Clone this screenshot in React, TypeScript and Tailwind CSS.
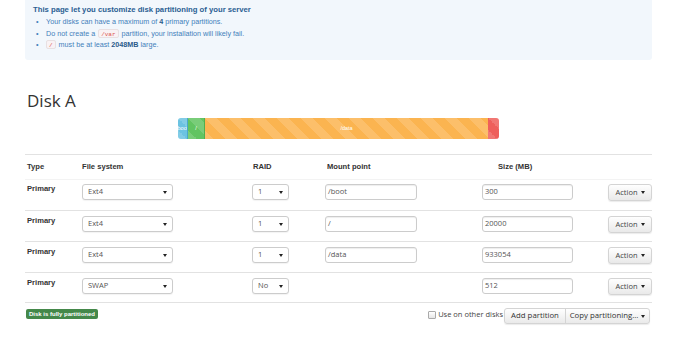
import React from "react";

function Caret() {
  return (
    <span className="inline-block w-0 h-0 border-l-[2.5px] border-r-[2.5px] border-t-[3px] border-l-transparent border-r-transparent border-t-[#222]" />
  );
}

function Select({ value, w }: { value: string; w: string }) {
  return (
    <div
      className={`${w} h-[16px] border border-[#ccc] rounded-[3px] bg-white flex items-center justify-between pl-[5px] pr-[5px] text-[7.5px] text-[#555] shadow-[0_1px_1px_rgba(0,0,0,0.05)]`}
      style={{ fontFamily: '"Open Sans", sans-serif' }}
    >
      <span>{value}</span>
      <Caret />
    </div>
  );
}

function Input({ value, w }: { value: string; w: string }) {
  return (
    <div
      className={`${w} h-[16px] border border-[#ccc] rounded-[3px] bg-white flex items-center pl-[2px] text-[7.5px] text-[#555] shadow-[inset_0_1px_1px_rgba(0,0,0,0.07)]`}
      style={{ fontFamily: '"Open Sans", sans-serif' }}
    >
      {value}
    </div>
  );
}

function ActionBtn() {
  return (
    <div
      className="w-[44px] h-[17px] border border-[#d4d4d4] rounded-[3px] bg-gradient-to-b from-white to-[#e9e9e9] flex items-center justify-center gap-[3px] text-[7.5px] text-[#444] shadow-[0_1px_1px_rgba(0,0,0,0.08)]"
      style={{ fontFamily: '"Open Sans", sans-serif' }}
    >
      <span>Action</span>
      <Caret />
    </div>
  );
}

const rows = [
  { fs: "Ext4", raid: "1", mount: "/boot", size: "300" },
  { fs: "Ext4", raid: "1", mount: "/", size: "20000" },
  { fs: "Ext4", raid: "1", mount: "/data", size: "933054" },
  { fs: "SWAP", raid: "No", mount: null as string | null, size: "512" },
];

const stripeBg =
  "bg-[linear-gradient(45deg,rgba(255,255,255,0.15)_25%,transparent_25%,transparent_50%,rgba(255,255,255,0.15)_50%,rgba(255,255,255,0.15)_75%,transparent_75%,transparent)] bg-[length:24px_24px]";

export default function App() {
  return (
    <div
      className="w-[680px] h-[338px] bg-white overflow-hidden"
      style={{ fontFamily: '"Liberation Sans", Arial, sans-serif' }}
    >
      <div className="ml-[25px] w-[627px]">
        {/* info panel */}
        <div className="h-[60px] bg-[#f2f7fc] rounded-b-[3px] pl-[8px] pt-[4px]">
          <div className="text-[7.7px] leading-[12px] font-bold text-[#2a5f93]">
            This page let you customize disk partitioning of your server
          </div>
          <div className="text-[7.2px] leading-[11.5px] text-[#4380bb]">
            <div className="flex items-center">
              <span className="w-[13px] pl-[3px]">•</span>
              <span>
                Your disks can have a maximum of <b className="text-[#2a5a8a]">4</b> primary partitions.
              </span>
            </div>
            <div className="flex items-center">
              <span className="w-[13px] pl-[3px]">•</span>
              <span className="flex items-center">
                Do not create a
                <code className="mx-[3px] px-[2px] h-[9px] leading-[9px] text-[6px] text-[#d9534f] bg-[#f9f2f4] border border-[#e8e0e2] rounded-[2px] font-mono">
                  /var
                </code>
                partition, your installation will likely fail.
              </span>
            </div>
            <div className="flex items-center">
              <span className="w-[13px] pl-[3px]">•</span>
              <span className="flex items-center">
                <code className="mr-[3px] px-[2px] h-[9px] leading-[9px] text-[6px] text-[#d9534f] bg-[#f9f2f4] border border-[#e8e0e2] rounded-[2px] font-mono">
                  /
                </code>
                must be at least&nbsp;<b className="text-[#2a5a8a]">2048MB</b>&nbsp;large.
              </span>
            </div>
          </div>
        </div>

        {/* heading */}
        <div
          className="mt-[31px] pl-[2px] text-[17px] leading-[20px] text-[#333]"
          style={{ fontFamily: '"Open Sans", sans-serif' }}
        >
          Disk A
        </div>

        {/* progress bar */}
        <div className="mt-[7px] mx-auto w-[321px] h-[21px] rounded-[3px] overflow-hidden flex text-[5.5px] text-white">
          <div className={`w-[10px] bg-[#6cc3e2] ${stripeBg} flex items-center overflow-hidden whitespace-nowrap border-r border-[#4aa8c8]`}>
            <span className="-ml-[2px]">/boot</span>
          </div>
          <div className={`w-[17px] bg-[#62c462] ${stripeBg} flex items-center justify-center border-r border-[#4fae4f]`}>
            /
          </div>
          <div className={`flex-1 bg-[#fbb450] ${stripeBg} flex items-center justify-center`}>
            /data
          </div>
          <div className={`w-[11px] bg-[#ee5f5b] ${stripeBg}`} />
        </div>

        {/* table */}
        <div className="mt-[15px] border-t border-[#e2e2e2] text-[7.6px] text-[#333]">
          <div className="h-[25px] flex items-center font-bold border-b border-[#f3f3f3]">
            <div className="w-[57px] pl-[2px]">Type</div>
            <div className="w-[171px]">File system</div>
            <div className="w-[72px]">RAID</div>
            <div className="w-[157px] pl-[2px]">Mount point</div>
            <div className="w-[125px] pl-[16px]">Size (MB)</div>
            <div className="w-[45px]" />
          </div>
          {rows.map((r, i) => (
            <div
              key={i}
              className={`${i === 0 || i === 3 ? "h-[30px]" : "h-[31px]"} flex items-start ${i > 0 ? "border-t border-[#e2e2e2]" : ""}`}
            >
              <div className={`w-[57px] pl-[2px] ${i === 0 ? "pt-[3px]" : "pt-[4px]"} leading-[12px] font-bold`}>Primary</div>
              <div className={`w-[171px] ${i === 0 ? "pt-[4px]" : "pt-[5px]"}`}>
                <Select value={r.fs} w="w-[91px]" />
              </div>
              <div className={`w-[72px] ${i === 0 ? "pt-[4px]" : "pt-[5px]"} -ml-[1px]`}>
                <Select value={r.raid} w="w-[37px]" />
              </div>
              <div className={`w-[157px] ${i === 0 ? "pt-[4px]" : "pt-[5px]"} ml-[1px]`}>
                {r.mount !== null && <Input value={r.mount} w="w-[92px]" />}
              </div>
              <div className={`w-[125px] ${i === 0 ? "pt-[4px]" : "pt-[5px]"}`}>
                <Input value={r.size} w="w-[91px]" />
              </div>
              <div className={`w-[45px] ${i === 0 ? "pt-[4px]" : "pt-[5px]"} flex justify-end`}>
                <ActionBtn />
              </div>
            </div>
          ))}
          <div className="border-t border-[#e2e2e2] flex items-start justify-between">
            <div className="mt-[6px] ml-[1px] h-[10px] px-[3px] bg-[#44884a] rounded-[2px] text-white font-bold text-[6px] leading-[10px]">
              Disk is fully partitioned
            </div>
            <div
              className="flex items-start mr-[2px]"
              style={{ fontFamily: '"Open Sans", sans-serif' }}
            >
              <div className="mt-[8px] w-[8px] h-[8px] border border-[#aaa] rounded-[1px] bg-gradient-to-b from-white to-[#e6e6e6]" />
              <span className="mt-[5px] ml-[2px] text-[7.5px] leading-[12px] text-[#444]">
                Use on other disks
              </span>
              <div className="mt-[5px] ml-[1px] flex h-[16px] border border-[#d4d4d4] rounded-[3px] bg-gradient-to-b from-white to-[#eaeaea] text-[7.8px] text-[#333] shadow-[0_1px_1px_rgba(0,0,0,0.08)]">
                <div className="w-[61px] flex items-center justify-center border-r border-[#d4d4d4]">
                  Add partition
                </div>
                <div className="w-[83px] flex items-center justify-center gap-[3px]">
                  <span>Copy partitioning...</span>
                  <Caret />
                </div>
              </div>
            </div>
          </div>
        </div>
      </div>
    </div>
  );
}
